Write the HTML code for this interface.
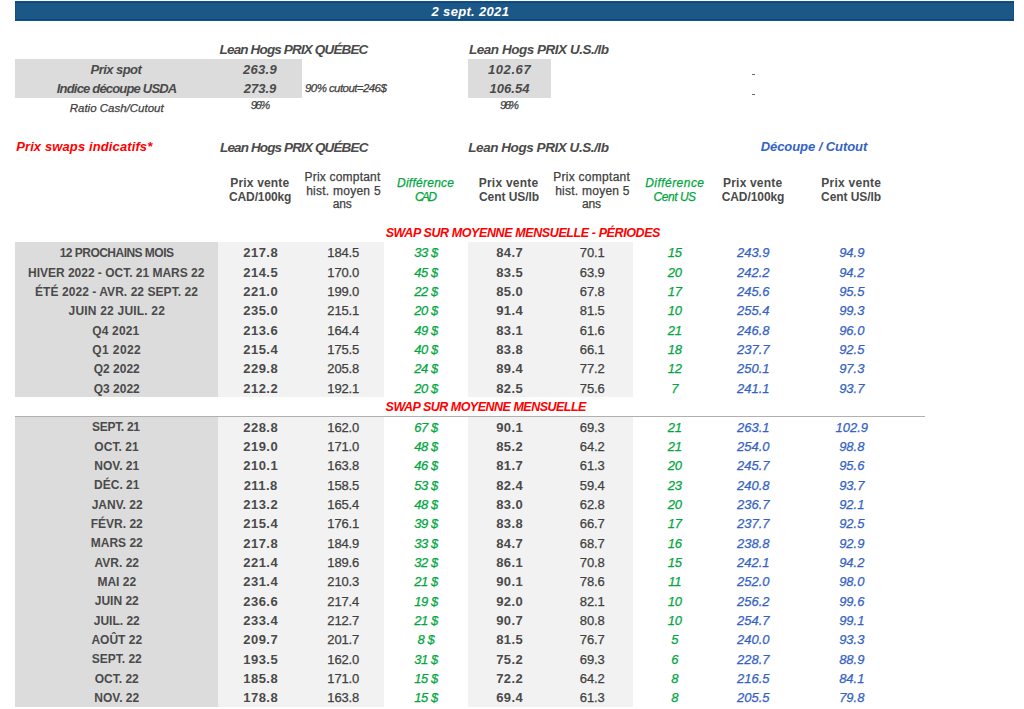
<!DOCTYPE html>
<html><head><meta charset="utf-8"><style>
html,body{margin:0;padding:0;background:#fff;width:1024px;height:709px;overflow:hidden;position:relative}
.r{position:absolute}
.t{position:absolute;font-family:"Liberation Sans",sans-serif;line-height:1;white-space:nowrap;box-sizing:content-box}
.date{font-size:13px;font-weight:700;font-style:italic;color:#ffffff;letter-spacing:0px}
.title{font-size:13.5px;font-weight:700;font-style:italic;color:#4a4a4a;letter-spacing:0px}
.toplab{font-size:13px;font-weight:700;font-style:italic;color:#4a4a4a;letter-spacing:0px}
.topval{font-size:13px;font-weight:700;font-style:italic;color:#4a4a4a;letter-spacing:0px}
.small{font-size:11.5px;font-weight:400;font-style:italic;color:#404040;letter-spacing:0px;-webkit-text-stroke:0.25px #404040}
.redt{font-size:13px;font-weight:700;font-style:italic;color:#ff0000;letter-spacing:0px}
.bluet{font-size:13px;font-weight:700;font-style:italic;color:#3462c4;letter-spacing:0px}
.hb{font-size:12px;font-weight:700;font-style:normal;color:#4a4a4a;letter-spacing:0px}
.hr{font-size:12px;font-weight:400;font-style:normal;color:#404040;letter-spacing:0.25px;-webkit-text-stroke:0.25px #404040}
.hg{font-size:12px;font-weight:400;font-style:italic;color:#00a63e;letter-spacing:0.3px;-webkit-text-stroke:0.25px #00a63e}
.swap{font-size:12.5px;font-weight:700;font-style:italic;color:#ff0000;letter-spacing:0px}
.lab{font-size:12px;font-weight:700;font-style:normal;color:#4a4a4a;letter-spacing:0px}
.db{font-size:13px;font-weight:700;font-style:normal;color:#4a4a4a;letter-spacing:0.45px}
.dr{font-size:13px;font-weight:400;font-style:normal;color:#404040;letter-spacing:-0.15px;-webkit-text-stroke:0.25px #404040}
.dg{font-size:13px;font-weight:400;font-style:italic;color:#00a63e;letter-spacing:-0.4px;-webkit-text-stroke:0.25px #00a63e}
.dbl{font-size:13px;font-weight:400;font-style:italic;color:#3462c4;letter-spacing:0.0px;-webkit-text-stroke:0.25px #3462c4}
</style></head><body>
<div class="r" style="left:15px;top:242.3px;width:203.20px;height:154.72px;background:#dcdcdc"></div>
<div class="r" style="left:218.2px;top:242.3px;width:166.10px;height:154.72px;background:#f2f2f2"></div>
<div class="r" style="left:467.5px;top:242.3px;width:165.90px;height:154.72px;background:#f2f2f2"></div>
<div class="r" style="left:15px;top:416.8px;width:203.20px;height:289.95px;background:#dcdcdc"></div>
<div class="r" style="left:218.2px;top:416.8px;width:166.10px;height:289.95px;background:#f2f2f2"></div>
<div class="r" style="left:467.5px;top:416.8px;width:165.90px;height:289.95px;background:#f2f2f2"></div>
<div class="r" style="left:15px;top:59px;width:287.00px;height:39.00px;background:#dcdcdc"></div>
<div class="r" style="left:468px;top:59px;width:83.00px;height:39.00px;background:#dcdcdc"></div>
<div class="r" style="left:15px;top:416px;width:910px;height:1px;background:#b0b0b0"></div>
<div class="r" style="left:15px;top:1px;width:999px;height:20px;background:#1b5787;box-sizing:border-box;border:1px solid #13508a"></div>
<div class="r" style="left:752px;top:74.0px;width:3px;height:1px;background:#6a6a6a"></div>
<div class="r" style="left:752px;top:93.5px;width:3px;height:1px;background:#6a6a6a"></div>
<div class="r" style="left:15px;top:2px;width:999px;height:1px;background:#0b477e"></div>
<div class="r" style="left:15px;top:19px;width:999px;height:1px;background:#0b477e"></div>
<div id="date" class="t date" style="left:320.10px;top:4.80px;width:300px;text-align:center;padding-left:0.327px;letter-spacing:0.327px"><span>2 sept. 2021</span></div>
<div id="leanqc1" class="t title" style="left:219.60px;top:43.27px;letter-spacing:-0.85px"><span>Lean Hogs PRIX QUÉBEC</span></div>
<div id="leanus1" class="t title" style="left:469.00px;top:43.27px;letter-spacing:-0.476px"><span>Lean Hogs PRIX U.S./lb</span></div>
<div id="prixspot" class="t toplab" style="left:-34.10px;top:63.00px;width:300px;text-align:center;padding-left:-0.55px;letter-spacing:-0.55px"><span>Prix spot</span></div>
<div id="indice" class="t toplab" style="left:-33.40px;top:82.20px;width:300px;text-align:center;padding-left:-0.811px;letter-spacing:-0.811px"><span>Indice découpe USDA</span></div>
<div id="v2639" class="t topval" style="left:109.70px;top:63.00px;width:300px;text-align:center;padding-left:0.35px;letter-spacing:0.35px"><span>263.9</span></div>
<div id="v2739" class="t topval" style="left:110.00px;top:82.20px;width:300px;text-align:center;padding-left:0px;letter-spacing:0px"><span>273.9</span></div>
<div id="v10267" class="t topval" style="left:359.00px;top:63.00px;width:300px;text-align:center;padding-left:0.6px;letter-spacing:0.6px"><span>102.67</span></div>
<div id="v10654" class="t topval" style="left:359.50px;top:82.20px;width:300px;text-align:center;padding-left:0px;letter-spacing:0px"><span>106.54</span></div>
<div id="cut90" class="t small" style="left:305.00px;top:83.07px;letter-spacing:-0.571px"><span>90% cutout=246$</span></div>
<div id="ratio" class="t small" style="left:-33.30px;top:102.97px;width:300px;text-align:center;padding-left:0px;letter-spacing:0px"><span>Ratio Cash/Cutout</span></div>
<div id="p96a" class="t small" style="left:109.50px;top:100.07px;width:300px;text-align:center;padding-left:-1.8px;letter-spacing:-1.8px"><span>96%</span></div>
<div id="p96b" class="t small" style="left:358.50px;top:100.07px;width:300px;text-align:center;padding-left:-2.0px;letter-spacing:-2.0px"><span>96%</span></div>
<div id="swaps" class="t redt" style="left:16.20px;top:140.00px;letter-spacing:0.115px"><span>Prix swaps indicatifs*</span></div>
<div id="leanqc2" class="t title" style="left:220.00px;top:140.57px;letter-spacing:-0.87px"><span>Lean Hogs PRIX QUÉBEC</span></div>
<div id="leanus2" class="t title" style="left:468.30px;top:140.57px;letter-spacing:-0.448px"><span>Lean Hogs PRIX U.S./lb</span></div>
<div id="decoupe" class="t bluet" style="left:664.00px;top:140.30px;width:300px;text-align:center;padding-left:-0.067px;letter-spacing:-0.067px"><span>Découpe / Cutout</span></div>
<div id="pv1" class="t hb" style="left:109.65px;top:177.04px;width:300px;text-align:center;padding-left:0.178px;letter-spacing:0.178px"><span>Prix vente</span></div>
<div id="cad1" class="t hb" style="left:110.15px;top:191.04px;width:300px;text-align:center;padding-left:-0.125px;letter-spacing:-0.125px"><span>CAD/100kg</span></div>
<div id="pc1" class="t hr" style="left:192.35px;top:171.04px;width:300px;text-align:center;padding-left:0.2px;letter-spacing:0.2px"><span>Prix comptant</span></div>
<div id="hm1" class="t hr" style="left:193.25px;top:184.64px;width:300px;text-align:center;padding-left:0.25px;letter-spacing:0.25px"><span>hist. moyen 5</span></div>
<div id="ans1" class="t hr" style="left:192.25px;top:198.14px;width:300px;text-align:center;padding-left:-0.15px;letter-spacing:-0.15px"><span>ans</span></div>
<div id="dif1" class="t hg" style="left:275.40px;top:177.34px;width:300px;text-align:center;padding-left:0.256px;letter-spacing:0.256px"><span>Différence</span></div>
<div id="dcad" class="t hg" style="left:275.00px;top:191.34px;width:300px;text-align:center;padding-left:-1.7px;letter-spacing:-1.7px"><span>CAD</span></div>
<div id="pv2" class="t hb" style="left:358.35px;top:177.04px;width:300px;text-align:center;padding-left:0.244px;letter-spacing:0.244px"><span>Prix vente</span></div>
<div id="cus2" class="t hb" style="left:359.05px;top:191.04px;width:300px;text-align:center;padding-left:-0.045px;letter-spacing:-0.045px"><span>Cent US/lb</span></div>
<div id="pc2" class="t hr" style="left:441.40px;top:171.04px;width:300px;text-align:center;padding-left:0.284px;letter-spacing:0.284px"><span>Prix comptant</span></div>
<div id="hm2" class="t hr" style="left:442.20px;top:184.64px;width:300px;text-align:center;padding-left:0.25px;letter-spacing:0.25px"><span>hist. moyen 5</span></div>
<div id="ans2" class="t hr" style="left:441.50px;top:198.14px;width:300px;text-align:center;padding-left:-0.15px;letter-spacing:-0.15px"><span>ans</span></div>
<div id="dif2" class="t hg" style="left:524.40px;top:177.34px;width:300px;text-align:center;padding-left:0.455px;letter-spacing:0.455px"><span>Différence</span></div>
<div id="dcus" class="t hg" style="left:524.60px;top:191.34px;width:300px;text-align:center;padding-left:-0.467px;letter-spacing:-0.467px"><span>Cent US</span></div>
<div id="pv3" class="t hb" style="left:602.50px;top:177.04px;width:300px;text-align:center;padding-left:0.178px;letter-spacing:0.178px"><span>Prix vente</span></div>
<div id="cad3" class="t hb" style="left:603.00px;top:191.04px;width:300px;text-align:center;padding-left:-0.075px;letter-spacing:-0.075px"><span>CAD/100kg</span></div>
<div id="pv4" class="t hb" style="left:701.00px;top:177.04px;width:300px;text-align:center;padding-left:0.267px;letter-spacing:0.267px"><span>Prix vente</span></div>
<div id="cus4" class="t hb" style="left:701.10px;top:191.04px;width:300px;text-align:center;padding-left:-0.066px;letter-spacing:-0.066px"><span>Cent US/lb</span></div>
<div id="swap1" class="t swap" style="left:385.70px;top:227.12px;letter-spacing:-0.4px"><span>SWAP SUR MOYENNE MENSUELLE - PÉRIODES</span></div>
<div id="swap2" class="t swap" style="left:385.60px;top:401.02px;letter-spacing:-0.504px"><span>SWAP SUR MOYENNE MENSUELLE</span></div>
<div id="r1_0_0" class="t lab" style="left:-33.45px;top:247.24px;width:300px;text-align:center;padding-left:-0.525px;letter-spacing:-0.525px"><span>12 PROCHAINS MOIS</span></div>
<div id="r1_0_1" class="t db" style="left:110.25px;top:246.40px;width:300px;text-align:center;padding-left:0.45px;letter-spacing:0.45px"><span>217.8</span></div>
<div id="r1_0_2" class="t dr" style="left:193.25px;top:246.40px;width:300px;text-align:center;padding-left:-0.15px;letter-spacing:-0.15px"><span>184.5</span></div>
<div id="r1_0_3" class="t dg" style="left:276.00px;top:246.40px;width:300px;text-align:center;padding-left:-0.4px;letter-spacing:-0.4px"><span>33 $</span></div>
<div id="r1_0_4" class="t db" style="left:359.25px;top:246.40px;width:300px;text-align:center;padding-left:0.45px;letter-spacing:0.45px"><span>84.7</span></div>
<div id="r1_0_5" class="t dr" style="left:442.20px;top:246.40px;width:300px;text-align:center;padding-left:-0.15px;letter-spacing:-0.15px"><span>70.1</span></div>
<div id="r1_0_6" class="t dg" style="left:524.70px;top:246.40px;width:300px;text-align:center;padding-left:-0.4px;letter-spacing:-0.4px"><span>15</span></div>
<div id="r1_0_7" class="t dbl" style="left:603.30px;top:246.40px;width:300px;text-align:center;padding-left:0.0px;letter-spacing:0.0px"><span>243.9</span></div>
<div id="r1_0_8" class="t dbl" style="left:701.80px;top:246.40px;width:300px;text-align:center;padding-left:0.0px;letter-spacing:0.0px"><span>94.9</span></div>
<div id="r1_1_0" class="t lab" style="left:-33.85px;top:266.58px;width:300px;text-align:center;padding-left:-0.014px;letter-spacing:-0.014px"><span>HIVER 2022 - OCT. 21 MARS 22</span></div>
<div id="r1_1_1" class="t db" style="left:110.25px;top:265.74px;width:300px;text-align:center;padding-left:0.45px;letter-spacing:0.45px"><span>214.5</span></div>
<div id="r1_1_2" class="t dr" style="left:193.25px;top:265.74px;width:300px;text-align:center;padding-left:-0.15px;letter-spacing:-0.15px"><span>170.0</span></div>
<div id="r1_1_3" class="t dg" style="left:276.00px;top:265.74px;width:300px;text-align:center;padding-left:-0.4px;letter-spacing:-0.4px"><span>45 $</span></div>
<div id="r1_1_4" class="t db" style="left:359.25px;top:265.74px;width:300px;text-align:center;padding-left:0.45px;letter-spacing:0.45px"><span>83.5</span></div>
<div id="r1_1_5" class="t dr" style="left:442.20px;top:265.74px;width:300px;text-align:center;padding-left:-0.15px;letter-spacing:-0.15px"><span>63.9</span></div>
<div id="r1_1_6" class="t dg" style="left:524.70px;top:265.74px;width:300px;text-align:center;padding-left:-0.4px;letter-spacing:-0.4px"><span>20</span></div>
<div id="r1_1_7" class="t dbl" style="left:603.30px;top:265.74px;width:300px;text-align:center;padding-left:0.0px;letter-spacing:0.0px"><span>242.2</span></div>
<div id="r1_1_8" class="t dbl" style="left:701.80px;top:265.74px;width:300px;text-align:center;padding-left:0.0px;letter-spacing:0.0px"><span>94.2</span></div>
<div id="r1_2_0" class="t lab" style="left:-33.55px;top:285.92px;width:300px;text-align:center;padding-left:0.054px;letter-spacing:0.054px"><span>ÉTÉ 2022 - AVR. 22 SEPT. 22</span></div>
<div id="r1_2_1" class="t db" style="left:110.25px;top:285.08px;width:300px;text-align:center;padding-left:0.45px;letter-spacing:0.45px"><span>221.0</span></div>
<div id="r1_2_2" class="t dr" style="left:193.25px;top:285.08px;width:300px;text-align:center;padding-left:-0.15px;letter-spacing:-0.15px"><span>199.0</span></div>
<div id="r1_2_3" class="t dg" style="left:276.00px;top:285.08px;width:300px;text-align:center;padding-left:-0.4px;letter-spacing:-0.4px"><span>22 $</span></div>
<div id="r1_2_4" class="t db" style="left:359.25px;top:285.08px;width:300px;text-align:center;padding-left:0.45px;letter-spacing:0.45px"><span>85.0</span></div>
<div id="r1_2_5" class="t dr" style="left:442.20px;top:285.08px;width:300px;text-align:center;padding-left:-0.15px;letter-spacing:-0.15px"><span>67.8</span></div>
<div id="r1_2_6" class="t dg" style="left:524.70px;top:285.08px;width:300px;text-align:center;padding-left:-0.4px;letter-spacing:-0.4px"><span>17</span></div>
<div id="r1_2_7" class="t dbl" style="left:603.30px;top:285.08px;width:300px;text-align:center;padding-left:0.0px;letter-spacing:0.0px"><span>245.6</span></div>
<div id="r1_2_8" class="t dbl" style="left:701.80px;top:285.08px;width:300px;text-align:center;padding-left:0.0px;letter-spacing:0.0px"><span>95.5</span></div>
<div id="r1_3_0" class="t lab" style="left:-33.35px;top:305.26px;width:300px;text-align:center;padding-left:0.2px;letter-spacing:0.2px"><span>JUIN 22 JUIL. 22</span></div>
<div id="r1_3_1" class="t db" style="left:110.25px;top:304.42px;width:300px;text-align:center;padding-left:0.45px;letter-spacing:0.45px"><span>235.0</span></div>
<div id="r1_3_2" class="t dr" style="left:193.25px;top:304.42px;width:300px;text-align:center;padding-left:-0.15px;letter-spacing:-0.15px"><span>215.1</span></div>
<div id="r1_3_3" class="t dg" style="left:276.00px;top:304.42px;width:300px;text-align:center;padding-left:-0.4px;letter-spacing:-0.4px"><span>20 $</span></div>
<div id="r1_3_4" class="t db" style="left:359.25px;top:304.42px;width:300px;text-align:center;padding-left:0.45px;letter-spacing:0.45px"><span>91.4</span></div>
<div id="r1_3_5" class="t dr" style="left:442.20px;top:304.42px;width:300px;text-align:center;padding-left:-0.15px;letter-spacing:-0.15px"><span>81.5</span></div>
<div id="r1_3_6" class="t dg" style="left:524.70px;top:304.42px;width:300px;text-align:center;padding-left:-0.4px;letter-spacing:-0.4px"><span>10</span></div>
<div id="r1_3_7" class="t dbl" style="left:603.30px;top:304.42px;width:300px;text-align:center;padding-left:0.0px;letter-spacing:0.0px"><span>255.4</span></div>
<div id="r1_3_8" class="t dbl" style="left:701.80px;top:304.42px;width:300px;text-align:center;padding-left:0.0px;letter-spacing:0.0px"><span>99.3</span></div>
<div id="r1_4_0" class="t lab" style="left:-34.35px;top:324.60px;width:300px;text-align:center;padding-left:0.167px;letter-spacing:0.167px"><span>Q4 2021</span></div>
<div id="r1_4_1" class="t db" style="left:110.25px;top:323.76px;width:300px;text-align:center;padding-left:0.45px;letter-spacing:0.45px"><span>213.6</span></div>
<div id="r1_4_2" class="t dr" style="left:193.25px;top:323.76px;width:300px;text-align:center;padding-left:-0.15px;letter-spacing:-0.15px"><span>164.4</span></div>
<div id="r1_4_3" class="t dg" style="left:276.00px;top:323.76px;width:300px;text-align:center;padding-left:-0.4px;letter-spacing:-0.4px"><span>49 $</span></div>
<div id="r1_4_4" class="t db" style="left:359.25px;top:323.76px;width:300px;text-align:center;padding-left:0.45px;letter-spacing:0.45px"><span>83.1</span></div>
<div id="r1_4_5" class="t dr" style="left:442.20px;top:323.76px;width:300px;text-align:center;padding-left:-0.15px;letter-spacing:-0.15px"><span>61.6</span></div>
<div id="r1_4_6" class="t dg" style="left:524.70px;top:323.76px;width:300px;text-align:center;padding-left:-0.4px;letter-spacing:-0.4px"><span>21</span></div>
<div id="r1_4_7" class="t dbl" style="left:603.30px;top:323.76px;width:300px;text-align:center;padding-left:0.0px;letter-spacing:0.0px"><span>246.8</span></div>
<div id="r1_4_8" class="t dbl" style="left:701.80px;top:323.76px;width:300px;text-align:center;padding-left:0.0px;letter-spacing:0.0px"><span>96.0</span></div>
<div id="r1_5_0" class="t lab" style="left:-33.65px;top:343.94px;width:300px;text-align:center;padding-left:0.4px;letter-spacing:0.4px"><span>Q1 2022</span></div>
<div id="r1_5_1" class="t db" style="left:110.25px;top:343.10px;width:300px;text-align:center;padding-left:0.45px;letter-spacing:0.45px"><span>215.4</span></div>
<div id="r1_5_2" class="t dr" style="left:193.25px;top:343.10px;width:300px;text-align:center;padding-left:-0.15px;letter-spacing:-0.15px"><span>175.5</span></div>
<div id="r1_5_3" class="t dg" style="left:276.00px;top:343.10px;width:300px;text-align:center;padding-left:-0.4px;letter-spacing:-0.4px"><span>40 $</span></div>
<div id="r1_5_4" class="t db" style="left:359.25px;top:343.10px;width:300px;text-align:center;padding-left:0.45px;letter-spacing:0.45px"><span>83.8</span></div>
<div id="r1_5_5" class="t dr" style="left:442.20px;top:343.10px;width:300px;text-align:center;padding-left:-0.15px;letter-spacing:-0.15px"><span>66.1</span></div>
<div id="r1_5_6" class="t dg" style="left:524.70px;top:343.10px;width:300px;text-align:center;padding-left:-0.4px;letter-spacing:-0.4px"><span>18</span></div>
<div id="r1_5_7" class="t dbl" style="left:603.30px;top:343.10px;width:300px;text-align:center;padding-left:0.0px;letter-spacing:0.0px"><span>237.7</span></div>
<div id="r1_5_8" class="t dbl" style="left:701.80px;top:343.10px;width:300px;text-align:center;padding-left:0.0px;letter-spacing:0.0px"><span>92.5</span></div>
<div id="r1_6_0" class="t lab" style="left:-33.25px;top:363.28px;width:300px;text-align:center;padding-left:0px;letter-spacing:0px"><span>Q2 2022</span></div>
<div id="r1_6_1" class="t db" style="left:110.25px;top:362.44px;width:300px;text-align:center;padding-left:0.45px;letter-spacing:0.45px"><span>229.8</span></div>
<div id="r1_6_2" class="t dr" style="left:193.25px;top:362.44px;width:300px;text-align:center;padding-left:-0.15px;letter-spacing:-0.15px"><span>205.8</span></div>
<div id="r1_6_3" class="t dg" style="left:276.00px;top:362.44px;width:300px;text-align:center;padding-left:-0.4px;letter-spacing:-0.4px"><span>24 $</span></div>
<div id="r1_6_4" class="t db" style="left:359.25px;top:362.44px;width:300px;text-align:center;padding-left:0.45px;letter-spacing:0.45px"><span>89.4</span></div>
<div id="r1_6_5" class="t dr" style="left:442.20px;top:362.44px;width:300px;text-align:center;padding-left:-0.15px;letter-spacing:-0.15px"><span>77.2</span></div>
<div id="r1_6_6" class="t dg" style="left:524.70px;top:362.44px;width:300px;text-align:center;padding-left:-0.4px;letter-spacing:-0.4px"><span>12</span></div>
<div id="r1_6_7" class="t dbl" style="left:603.30px;top:362.44px;width:300px;text-align:center;padding-left:0.0px;letter-spacing:0.0px"><span>250.1</span></div>
<div id="r1_6_8" class="t dbl" style="left:701.80px;top:362.44px;width:300px;text-align:center;padding-left:0.0px;letter-spacing:0.0px"><span>97.3</span></div>
<div id="r1_7_0" class="t lab" style="left:-33.25px;top:382.62px;width:300px;text-align:center;padding-left:0px;letter-spacing:0px"><span>Q3 2022</span></div>
<div id="r1_7_1" class="t db" style="left:110.25px;top:381.78px;width:300px;text-align:center;padding-left:0.45px;letter-spacing:0.45px"><span>212.2</span></div>
<div id="r1_7_2" class="t dr" style="left:193.25px;top:381.78px;width:300px;text-align:center;padding-left:-0.15px;letter-spacing:-0.15px"><span>192.1</span></div>
<div id="r1_7_3" class="t dg" style="left:276.00px;top:381.78px;width:300px;text-align:center;padding-left:-0.4px;letter-spacing:-0.4px"><span>20 $</span></div>
<div id="r1_7_4" class="t db" style="left:359.25px;top:381.78px;width:300px;text-align:center;padding-left:0.45px;letter-spacing:0.45px"><span>82.5</span></div>
<div id="r1_7_5" class="t dr" style="left:442.20px;top:381.78px;width:300px;text-align:center;padding-left:-0.15px;letter-spacing:-0.15px"><span>75.6</span></div>
<div id="r1_7_6" class="t dg" style="left:524.70px;top:381.78px;width:300px;text-align:center;padding-left:-0.4px;letter-spacing:-0.4px"><span>7</span></div>
<div id="r1_7_7" class="t dbl" style="left:603.30px;top:381.78px;width:300px;text-align:center;padding-left:0.0px;letter-spacing:0.0px"><span>241.1</span></div>
<div id="r1_7_8" class="t dbl" style="left:701.80px;top:381.78px;width:300px;text-align:center;padding-left:0.0px;letter-spacing:0.0px"><span>93.7</span></div>
<div id="r2_0_0" class="t lab" style="left:-34.15px;top:421.44px;width:300px;text-align:center;padding-left:-0.314px;letter-spacing:-0.314px"><span>SEPT. 21</span></div>
<div id="r2_0_1" class="t db" style="left:110.25px;top:420.60px;width:300px;text-align:center;padding-left:0.45px;letter-spacing:0.45px"><span>228.8</span></div>
<div id="r2_0_2" class="t dr" style="left:193.25px;top:420.60px;width:300px;text-align:center;padding-left:-0.15px;letter-spacing:-0.15px"><span>162.0</span></div>
<div id="r2_0_3" class="t dg" style="left:276.00px;top:420.60px;width:300px;text-align:center;padding-left:-0.4px;letter-spacing:-0.4px"><span>67 $</span></div>
<div id="r2_0_4" class="t db" style="left:359.25px;top:420.60px;width:300px;text-align:center;padding-left:0.45px;letter-spacing:0.45px"><span>90.1</span></div>
<div id="r2_0_5" class="t dr" style="left:442.20px;top:420.60px;width:300px;text-align:center;padding-left:-0.15px;letter-spacing:-0.15px"><span>69.3</span></div>
<div id="r2_0_6" class="t dg" style="left:524.70px;top:420.60px;width:300px;text-align:center;padding-left:-0.4px;letter-spacing:-0.4px"><span>21</span></div>
<div id="r2_0_7" class="t dbl" style="left:603.30px;top:420.60px;width:300px;text-align:center;padding-left:0.0px;letter-spacing:0.0px"><span>263.1</span></div>
<div id="r2_0_8" class="t dbl" style="left:701.80px;top:420.60px;width:300px;text-align:center;padding-left:0.0px;letter-spacing:0.0px"><span>102.9</span></div>
<div id="r2_1_0" class="t lab" style="left:-33.55px;top:440.77px;width:300px;text-align:center;padding-left:0.034px;letter-spacing:0.034px"><span>OCT. 21</span></div>
<div id="r2_1_1" class="t db" style="left:110.25px;top:439.93px;width:300px;text-align:center;padding-left:0.45px;letter-spacing:0.45px"><span>219.0</span></div>
<div id="r2_1_2" class="t dr" style="left:193.25px;top:439.93px;width:300px;text-align:center;padding-left:-0.15px;letter-spacing:-0.15px"><span>171.0</span></div>
<div id="r2_1_3" class="t dg" style="left:276.00px;top:439.93px;width:300px;text-align:center;padding-left:-0.4px;letter-spacing:-0.4px"><span>48 $</span></div>
<div id="r2_1_4" class="t db" style="left:359.25px;top:439.93px;width:300px;text-align:center;padding-left:0.45px;letter-spacing:0.45px"><span>85.2</span></div>
<div id="r2_1_5" class="t dr" style="left:442.20px;top:439.93px;width:300px;text-align:center;padding-left:-0.15px;letter-spacing:-0.15px"><span>64.2</span></div>
<div id="r2_1_6" class="t dg" style="left:524.70px;top:439.93px;width:300px;text-align:center;padding-left:-0.4px;letter-spacing:-0.4px"><span>21</span></div>
<div id="r2_1_7" class="t dbl" style="left:603.30px;top:439.93px;width:300px;text-align:center;padding-left:0.0px;letter-spacing:0.0px"><span>254.0</span></div>
<div id="r2_1_8" class="t dbl" style="left:701.80px;top:439.93px;width:300px;text-align:center;padding-left:0.0px;letter-spacing:0.0px"><span>98.8</span></div>
<div id="r2_2_0" class="t lab" style="left:-33.25px;top:460.10px;width:300px;text-align:center;padding-left:0px;letter-spacing:0px"><span>NOV. 21</span></div>
<div id="r2_2_1" class="t db" style="left:110.25px;top:459.26px;width:300px;text-align:center;padding-left:0.45px;letter-spacing:0.45px"><span>210.1</span></div>
<div id="r2_2_2" class="t dr" style="left:193.25px;top:459.26px;width:300px;text-align:center;padding-left:-0.15px;letter-spacing:-0.15px"><span>163.8</span></div>
<div id="r2_2_3" class="t dg" style="left:276.00px;top:459.26px;width:300px;text-align:center;padding-left:-0.4px;letter-spacing:-0.4px"><span>46 $</span></div>
<div id="r2_2_4" class="t db" style="left:359.25px;top:459.26px;width:300px;text-align:center;padding-left:0.45px;letter-spacing:0.45px"><span>81.7</span></div>
<div id="r2_2_5" class="t dr" style="left:442.20px;top:459.26px;width:300px;text-align:center;padding-left:-0.15px;letter-spacing:-0.15px"><span>61.3</span></div>
<div id="r2_2_6" class="t dg" style="left:524.70px;top:459.26px;width:300px;text-align:center;padding-left:-0.4px;letter-spacing:-0.4px"><span>20</span></div>
<div id="r2_2_7" class="t dbl" style="left:603.30px;top:459.26px;width:300px;text-align:center;padding-left:0.0px;letter-spacing:0.0px"><span>245.7</span></div>
<div id="r2_2_8" class="t dbl" style="left:701.80px;top:459.26px;width:300px;text-align:center;padding-left:0.0px;letter-spacing:0.0px"><span>95.6</span></div>
<div id="r2_3_0" class="t lab" style="left:-33.25px;top:479.43px;width:300px;text-align:center;padding-left:0px;letter-spacing:0px"><span>DÉC. 21</span></div>
<div id="r2_3_1" class="t db" style="left:110.25px;top:478.59px;width:300px;text-align:center;padding-left:0.45px;letter-spacing:0.45px"><span>211.8</span></div>
<div id="r2_3_2" class="t dr" style="left:193.25px;top:478.59px;width:300px;text-align:center;padding-left:-0.15px;letter-spacing:-0.15px"><span>158.5</span></div>
<div id="r2_3_3" class="t dg" style="left:276.00px;top:478.59px;width:300px;text-align:center;padding-left:-0.4px;letter-spacing:-0.4px"><span>53 $</span></div>
<div id="r2_3_4" class="t db" style="left:359.25px;top:478.59px;width:300px;text-align:center;padding-left:0.45px;letter-spacing:0.45px"><span>82.4</span></div>
<div id="r2_3_5" class="t dr" style="left:442.20px;top:478.59px;width:300px;text-align:center;padding-left:-0.15px;letter-spacing:-0.15px"><span>59.4</span></div>
<div id="r2_3_6" class="t dg" style="left:524.70px;top:478.59px;width:300px;text-align:center;padding-left:-0.4px;letter-spacing:-0.4px"><span>23</span></div>
<div id="r2_3_7" class="t dbl" style="left:603.30px;top:478.59px;width:300px;text-align:center;padding-left:0.0px;letter-spacing:0.0px"><span>240.8</span></div>
<div id="r2_3_8" class="t dbl" style="left:701.80px;top:478.59px;width:300px;text-align:center;padding-left:0.0px;letter-spacing:0.0px"><span>93.7</span></div>
<div id="r2_4_0" class="t lab" style="left:-32.85px;top:498.76px;width:300px;text-align:center;padding-left:0.0px;letter-spacing:0.0px"><span>JANV. 22</span></div>
<div id="r2_4_1" class="t db" style="left:110.25px;top:497.92px;width:300px;text-align:center;padding-left:0.45px;letter-spacing:0.45px"><span>213.2</span></div>
<div id="r2_4_2" class="t dr" style="left:193.25px;top:497.92px;width:300px;text-align:center;padding-left:-0.15px;letter-spacing:-0.15px"><span>165.4</span></div>
<div id="r2_4_3" class="t dg" style="left:276.00px;top:497.92px;width:300px;text-align:center;padding-left:-0.4px;letter-spacing:-0.4px"><span>48 $</span></div>
<div id="r2_4_4" class="t db" style="left:359.25px;top:497.92px;width:300px;text-align:center;padding-left:0.45px;letter-spacing:0.45px"><span>83.0</span></div>
<div id="r2_4_5" class="t dr" style="left:442.20px;top:497.92px;width:300px;text-align:center;padding-left:-0.15px;letter-spacing:-0.15px"><span>62.8</span></div>
<div id="r2_4_6" class="t dg" style="left:524.70px;top:497.92px;width:300px;text-align:center;padding-left:-0.4px;letter-spacing:-0.4px"><span>20</span></div>
<div id="r2_4_7" class="t dbl" style="left:603.30px;top:497.92px;width:300px;text-align:center;padding-left:0.0px;letter-spacing:0.0px"><span>236.7</span></div>
<div id="r2_4_8" class="t dbl" style="left:701.80px;top:497.92px;width:300px;text-align:center;padding-left:0.0px;letter-spacing:0.0px"><span>92.1</span></div>
<div id="r2_5_0" class="t lab" style="left:-33.25px;top:518.09px;width:300px;text-align:center;padding-left:0px;letter-spacing:0px"><span>FÉVR. 22</span></div>
<div id="r2_5_1" class="t db" style="left:110.25px;top:517.25px;width:300px;text-align:center;padding-left:0.45px;letter-spacing:0.45px"><span>215.4</span></div>
<div id="r2_5_2" class="t dr" style="left:193.25px;top:517.25px;width:300px;text-align:center;padding-left:-0.15px;letter-spacing:-0.15px"><span>176.1</span></div>
<div id="r2_5_3" class="t dg" style="left:276.00px;top:517.25px;width:300px;text-align:center;padding-left:-0.4px;letter-spacing:-0.4px"><span>39 $</span></div>
<div id="r2_5_4" class="t db" style="left:359.25px;top:517.25px;width:300px;text-align:center;padding-left:0.45px;letter-spacing:0.45px"><span>83.8</span></div>
<div id="r2_5_5" class="t dr" style="left:442.20px;top:517.25px;width:300px;text-align:center;padding-left:-0.15px;letter-spacing:-0.15px"><span>66.7</span></div>
<div id="r2_5_6" class="t dg" style="left:524.70px;top:517.25px;width:300px;text-align:center;padding-left:-0.4px;letter-spacing:-0.4px"><span>17</span></div>
<div id="r2_5_7" class="t dbl" style="left:603.30px;top:517.25px;width:300px;text-align:center;padding-left:0.0px;letter-spacing:0.0px"><span>237.7</span></div>
<div id="r2_5_8" class="t dbl" style="left:701.80px;top:517.25px;width:300px;text-align:center;padding-left:0.0px;letter-spacing:0.0px"><span>92.5</span></div>
<div id="r2_6_0" class="t lab" style="left:-33.25px;top:537.42px;width:300px;text-align:center;padding-left:0px;letter-spacing:0px"><span>MARS 22</span></div>
<div id="r2_6_1" class="t db" style="left:110.25px;top:536.58px;width:300px;text-align:center;padding-left:0.45px;letter-spacing:0.45px"><span>217.8</span></div>
<div id="r2_6_2" class="t dr" style="left:193.25px;top:536.58px;width:300px;text-align:center;padding-left:-0.15px;letter-spacing:-0.15px"><span>184.9</span></div>
<div id="r2_6_3" class="t dg" style="left:276.00px;top:536.58px;width:300px;text-align:center;padding-left:-0.4px;letter-spacing:-0.4px"><span>33 $</span></div>
<div id="r2_6_4" class="t db" style="left:359.25px;top:536.58px;width:300px;text-align:center;padding-left:0.45px;letter-spacing:0.45px"><span>84.7</span></div>
<div id="r2_6_5" class="t dr" style="left:442.20px;top:536.58px;width:300px;text-align:center;padding-left:-0.15px;letter-spacing:-0.15px"><span>68.7</span></div>
<div id="r2_6_6" class="t dg" style="left:524.70px;top:536.58px;width:300px;text-align:center;padding-left:-0.4px;letter-spacing:-0.4px"><span>16</span></div>
<div id="r2_6_7" class="t dbl" style="left:603.30px;top:536.58px;width:300px;text-align:center;padding-left:0.0px;letter-spacing:0.0px"><span>238.8</span></div>
<div id="r2_6_8" class="t dbl" style="left:701.80px;top:536.58px;width:300px;text-align:center;padding-left:0.0px;letter-spacing:0.0px"><span>92.9</span></div>
<div id="r2_7_0" class="t lab" style="left:-33.25px;top:556.75px;width:300px;text-align:center;padding-left:0px;letter-spacing:0px"><span>AVR. 22</span></div>
<div id="r2_7_1" class="t db" style="left:110.25px;top:555.91px;width:300px;text-align:center;padding-left:0.45px;letter-spacing:0.45px"><span>221.4</span></div>
<div id="r2_7_2" class="t dr" style="left:193.25px;top:555.91px;width:300px;text-align:center;padding-left:-0.15px;letter-spacing:-0.15px"><span>189.6</span></div>
<div id="r2_7_3" class="t dg" style="left:276.00px;top:555.91px;width:300px;text-align:center;padding-left:-0.4px;letter-spacing:-0.4px"><span>32 $</span></div>
<div id="r2_7_4" class="t db" style="left:359.25px;top:555.91px;width:300px;text-align:center;padding-left:0.45px;letter-spacing:0.45px"><span>86.1</span></div>
<div id="r2_7_5" class="t dr" style="left:442.20px;top:555.91px;width:300px;text-align:center;padding-left:-0.15px;letter-spacing:-0.15px"><span>70.8</span></div>
<div id="r2_7_6" class="t dg" style="left:524.70px;top:555.91px;width:300px;text-align:center;padding-left:-0.4px;letter-spacing:-0.4px"><span>15</span></div>
<div id="r2_7_7" class="t dbl" style="left:603.30px;top:555.91px;width:300px;text-align:center;padding-left:0.0px;letter-spacing:0.0px"><span>242.1</span></div>
<div id="r2_7_8" class="t dbl" style="left:701.80px;top:555.91px;width:300px;text-align:center;padding-left:0.0px;letter-spacing:0.0px"><span>94.2</span></div>
<div id="r2_8_0" class="t lab" style="left:-33.25px;top:576.08px;width:300px;text-align:center;padding-left:0px;letter-spacing:0px"><span>MAI 22</span></div>
<div id="r2_8_1" class="t db" style="left:110.25px;top:575.24px;width:300px;text-align:center;padding-left:0.45px;letter-spacing:0.45px"><span>231.4</span></div>
<div id="r2_8_2" class="t dr" style="left:193.25px;top:575.24px;width:300px;text-align:center;padding-left:-0.15px;letter-spacing:-0.15px"><span>210.3</span></div>
<div id="r2_8_3" class="t dg" style="left:276.00px;top:575.24px;width:300px;text-align:center;padding-left:-0.4px;letter-spacing:-0.4px"><span>21 $</span></div>
<div id="r2_8_4" class="t db" style="left:359.25px;top:575.24px;width:300px;text-align:center;padding-left:0.45px;letter-spacing:0.45px"><span>90.1</span></div>
<div id="r2_8_5" class="t dr" style="left:442.20px;top:575.24px;width:300px;text-align:center;padding-left:-0.15px;letter-spacing:-0.15px"><span>78.6</span></div>
<div id="r2_8_6" class="t dg" style="left:524.70px;top:575.24px;width:300px;text-align:center;padding-left:-0.4px;letter-spacing:-0.4px"><span>11</span></div>
<div id="r2_8_7" class="t dbl" style="left:603.30px;top:575.24px;width:300px;text-align:center;padding-left:0.0px;letter-spacing:0.0px"><span>252.0</span></div>
<div id="r2_8_8" class="t dbl" style="left:701.80px;top:575.24px;width:300px;text-align:center;padding-left:0.0px;letter-spacing:0.0px"><span>98.0</span></div>
<div id="r2_9_0" class="t lab" style="left:-33.25px;top:595.41px;width:300px;text-align:center;padding-left:0px;letter-spacing:0px"><span>JUIN 22</span></div>
<div id="r2_9_1" class="t db" style="left:110.25px;top:594.57px;width:300px;text-align:center;padding-left:0.45px;letter-spacing:0.45px"><span>236.6</span></div>
<div id="r2_9_2" class="t dr" style="left:193.25px;top:594.57px;width:300px;text-align:center;padding-left:-0.15px;letter-spacing:-0.15px"><span>217.4</span></div>
<div id="r2_9_3" class="t dg" style="left:276.00px;top:594.57px;width:300px;text-align:center;padding-left:-0.4px;letter-spacing:-0.4px"><span>19 $</span></div>
<div id="r2_9_4" class="t db" style="left:359.25px;top:594.57px;width:300px;text-align:center;padding-left:0.45px;letter-spacing:0.45px"><span>92.0</span></div>
<div id="r2_9_5" class="t dr" style="left:442.20px;top:594.57px;width:300px;text-align:center;padding-left:-0.15px;letter-spacing:-0.15px"><span>82.1</span></div>
<div id="r2_9_6" class="t dg" style="left:524.70px;top:594.57px;width:300px;text-align:center;padding-left:-0.4px;letter-spacing:-0.4px"><span>10</span></div>
<div id="r2_9_7" class="t dbl" style="left:603.30px;top:594.57px;width:300px;text-align:center;padding-left:0.0px;letter-spacing:0.0px"><span>256.2</span></div>
<div id="r2_9_8" class="t dbl" style="left:701.80px;top:594.57px;width:300px;text-align:center;padding-left:0.0px;letter-spacing:0.0px"><span>99.6</span></div>
<div id="r2_10_0" class="t lab" style="left:-33.25px;top:614.74px;width:300px;text-align:center;padding-left:0px;letter-spacing:0px"><span>JUIL. 22</span></div>
<div id="r2_10_1" class="t db" style="left:110.25px;top:613.90px;width:300px;text-align:center;padding-left:0.45px;letter-spacing:0.45px"><span>233.4</span></div>
<div id="r2_10_2" class="t dr" style="left:193.25px;top:613.90px;width:300px;text-align:center;padding-left:-0.15px;letter-spacing:-0.15px"><span>212.7</span></div>
<div id="r2_10_3" class="t dg" style="left:276.00px;top:613.90px;width:300px;text-align:center;padding-left:-0.4px;letter-spacing:-0.4px"><span>21 $</span></div>
<div id="r2_10_4" class="t db" style="left:359.25px;top:613.90px;width:300px;text-align:center;padding-left:0.45px;letter-spacing:0.45px"><span>90.7</span></div>
<div id="r2_10_5" class="t dr" style="left:442.20px;top:613.90px;width:300px;text-align:center;padding-left:-0.15px;letter-spacing:-0.15px"><span>80.8</span></div>
<div id="r2_10_6" class="t dg" style="left:524.70px;top:613.90px;width:300px;text-align:center;padding-left:-0.4px;letter-spacing:-0.4px"><span>10</span></div>
<div id="r2_10_7" class="t dbl" style="left:603.30px;top:613.90px;width:300px;text-align:center;padding-left:0.0px;letter-spacing:0.0px"><span>254.7</span></div>
<div id="r2_10_8" class="t dbl" style="left:701.80px;top:613.90px;width:300px;text-align:center;padding-left:0.0px;letter-spacing:0.0px"><span>99.1</span></div>
<div id="r2_11_0" class="t lab" style="left:-33.25px;top:634.07px;width:300px;text-align:center;padding-left:0px;letter-spacing:0px"><span>AOÛT 22</span></div>
<div id="r2_11_1" class="t db" style="left:110.25px;top:633.23px;width:300px;text-align:center;padding-left:0.45px;letter-spacing:0.45px"><span>209.7</span></div>
<div id="r2_11_2" class="t dr" style="left:193.25px;top:633.23px;width:300px;text-align:center;padding-left:-0.15px;letter-spacing:-0.15px"><span>201.7</span></div>
<div id="r2_11_3" class="t dg" style="left:276.00px;top:633.23px;width:300px;text-align:center;padding-left:-0.4px;letter-spacing:-0.4px"><span>8 $</span></div>
<div id="r2_11_4" class="t db" style="left:359.25px;top:633.23px;width:300px;text-align:center;padding-left:0.45px;letter-spacing:0.45px"><span>81.5</span></div>
<div id="r2_11_5" class="t dr" style="left:442.20px;top:633.23px;width:300px;text-align:center;padding-left:-0.15px;letter-spacing:-0.15px"><span>76.7</span></div>
<div id="r2_11_6" class="t dg" style="left:524.70px;top:633.23px;width:300px;text-align:center;padding-left:-0.4px;letter-spacing:-0.4px"><span>5</span></div>
<div id="r2_11_7" class="t dbl" style="left:603.30px;top:633.23px;width:300px;text-align:center;padding-left:0.0px;letter-spacing:0.0px"><span>240.0</span></div>
<div id="r2_11_8" class="t dbl" style="left:701.80px;top:633.23px;width:300px;text-align:center;padding-left:0.0px;letter-spacing:0.0px"><span>93.3</span></div>
<div id="r2_12_0" class="t lab" style="left:-33.25px;top:653.40px;width:300px;text-align:center;padding-left:0px;letter-spacing:0px"><span>SEPT. 22</span></div>
<div id="r2_12_1" class="t db" style="left:110.25px;top:652.56px;width:300px;text-align:center;padding-left:0.45px;letter-spacing:0.45px"><span>193.5</span></div>
<div id="r2_12_2" class="t dr" style="left:193.25px;top:652.56px;width:300px;text-align:center;padding-left:-0.15px;letter-spacing:-0.15px"><span>162.0</span></div>
<div id="r2_12_3" class="t dg" style="left:276.00px;top:652.56px;width:300px;text-align:center;padding-left:-0.4px;letter-spacing:-0.4px"><span>31 $</span></div>
<div id="r2_12_4" class="t db" style="left:359.25px;top:652.56px;width:300px;text-align:center;padding-left:0.45px;letter-spacing:0.45px"><span>75.2</span></div>
<div id="r2_12_5" class="t dr" style="left:442.20px;top:652.56px;width:300px;text-align:center;padding-left:-0.15px;letter-spacing:-0.15px"><span>69.3</span></div>
<div id="r2_12_6" class="t dg" style="left:524.70px;top:652.56px;width:300px;text-align:center;padding-left:-0.4px;letter-spacing:-0.4px"><span>6</span></div>
<div id="r2_12_7" class="t dbl" style="left:603.30px;top:652.56px;width:300px;text-align:center;padding-left:0.0px;letter-spacing:0.0px"><span>228.7</span></div>
<div id="r2_12_8" class="t dbl" style="left:701.80px;top:652.56px;width:300px;text-align:center;padding-left:0.0px;letter-spacing:0.0px"><span>88.9</span></div>
<div id="r2_13_0" class="t lab" style="left:-33.25px;top:672.73px;width:300px;text-align:center;padding-left:0px;letter-spacing:0px"><span>OCT. 22</span></div>
<div id="r2_13_1" class="t db" style="left:110.25px;top:671.89px;width:300px;text-align:center;padding-left:0.45px;letter-spacing:0.45px"><span>185.8</span></div>
<div id="r2_13_2" class="t dr" style="left:193.25px;top:671.89px;width:300px;text-align:center;padding-left:-0.15px;letter-spacing:-0.15px"><span>171.0</span></div>
<div id="r2_13_3" class="t dg" style="left:276.00px;top:671.89px;width:300px;text-align:center;padding-left:-0.4px;letter-spacing:-0.4px"><span>15 $</span></div>
<div id="r2_13_4" class="t db" style="left:359.25px;top:671.89px;width:300px;text-align:center;padding-left:0.45px;letter-spacing:0.45px"><span>72.2</span></div>
<div id="r2_13_5" class="t dr" style="left:442.20px;top:671.89px;width:300px;text-align:center;padding-left:-0.15px;letter-spacing:-0.15px"><span>64.2</span></div>
<div id="r2_13_6" class="t dg" style="left:524.70px;top:671.89px;width:300px;text-align:center;padding-left:-0.4px;letter-spacing:-0.4px"><span>8</span></div>
<div id="r2_13_7" class="t dbl" style="left:603.30px;top:671.89px;width:300px;text-align:center;padding-left:0.0px;letter-spacing:0.0px"><span>216.5</span></div>
<div id="r2_13_8" class="t dbl" style="left:701.80px;top:671.89px;width:300px;text-align:center;padding-left:0.0px;letter-spacing:0.0px"><span>84.1</span></div>
<div id="r2_14_0" class="t lab" style="left:-33.25px;top:692.06px;width:300px;text-align:center;padding-left:0px;letter-spacing:0px"><span>NOV. 22</span></div>
<div id="r2_14_1" class="t db" style="left:110.25px;top:691.22px;width:300px;text-align:center;padding-left:0.45px;letter-spacing:0.45px"><span>178.8</span></div>
<div id="r2_14_2" class="t dr" style="left:193.25px;top:691.22px;width:300px;text-align:center;padding-left:-0.15px;letter-spacing:-0.15px"><span>163.8</span></div>
<div id="r2_14_3" class="t dg" style="left:276.00px;top:691.22px;width:300px;text-align:center;padding-left:-0.4px;letter-spacing:-0.4px"><span>15 $</span></div>
<div id="r2_14_4" class="t db" style="left:359.25px;top:691.22px;width:300px;text-align:center;padding-left:0.45px;letter-spacing:0.45px"><span>69.4</span></div>
<div id="r2_14_5" class="t dr" style="left:442.20px;top:691.22px;width:300px;text-align:center;padding-left:-0.15px;letter-spacing:-0.15px"><span>61.3</span></div>
<div id="r2_14_6" class="t dg" style="left:524.70px;top:691.22px;width:300px;text-align:center;padding-left:-0.4px;letter-spacing:-0.4px"><span>8</span></div>
<div id="r2_14_7" class="t dbl" style="left:603.30px;top:691.22px;width:300px;text-align:center;padding-left:0.0px;letter-spacing:0.0px"><span>205.5</span></div>
<div id="r2_14_8" class="t dbl" style="left:701.80px;top:691.22px;width:300px;text-align:center;padding-left:0.0px;letter-spacing:0.0px"><span>79.8</span></div>
</body></html>
